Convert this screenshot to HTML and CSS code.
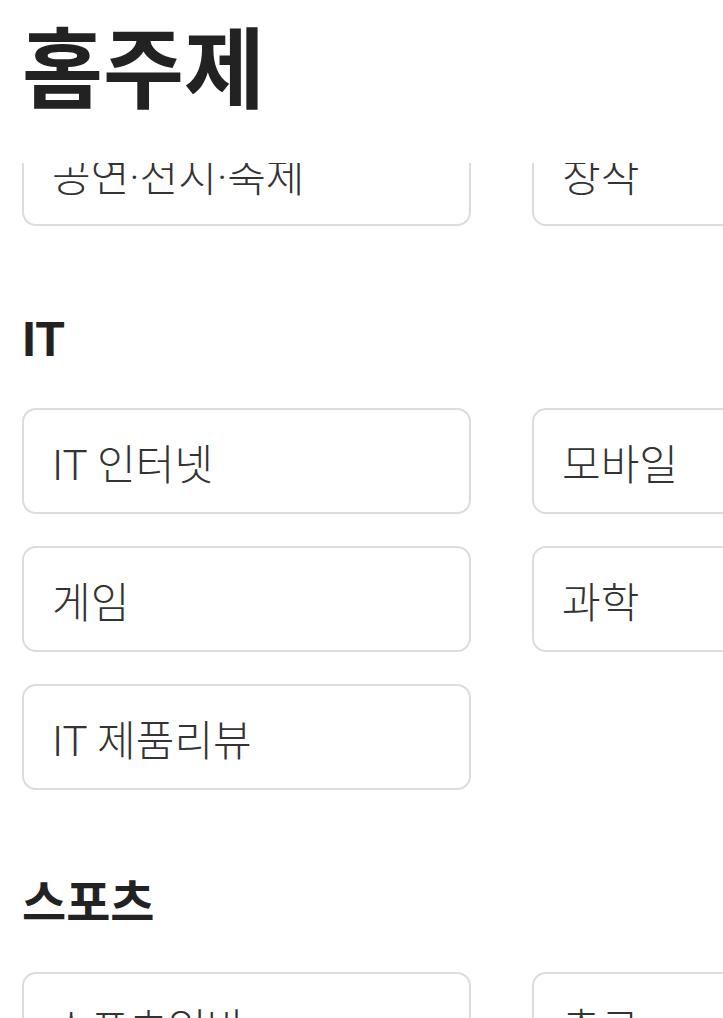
FILE: index.html
```html
<!DOCTYPE html>
<html lang="ko">
<head>
<meta charset="utf-8">
<title>홈주제</title>
<link rel="stylesheet" href="styles.css">
</head>
<body>
<div class="page">
  <header class="top">
    <h1 class="title">홈주제</h1>
  </header>
  <main class="scroll">
    <div class="list">
      <section class="section">
        <div class="grid">
          <div class="card">공연·전시·축제</div>
          <div class="card">창작</div>
        </div>
      </section>
      <section class="section">
        <h2 class="heading">IT</h2>
        <div class="grid">
          <div class="card">IT 인터넷</div>
          <div class="card">모바일</div>
          <div class="card">게임</div>
          <div class="card">과학</div>
          <div class="card">IT 제품리뷰</div>
        </div>
      </section>
      <section class="section">
        <h2 class="heading">스포츠</h2>
        <div class="grid">
          <div class="card">스포츠일반</div>
          <div class="card">축구</div>
        </div>
      </section>
    </div>
  </main>
</div>
</body>
</html>
```
FILE: styles.css
```css
html, body {
  margin: 0;
  padding: 0;
  background: #fff;
}
body {
  font-family: "Roboto", "Noto Sans CJK KR", sans-serif;
  color: #222;
  width: 723px;
  height: 1018px;
  overflow: hidden;
}
.page {
  display: flex;
  flex-direction: column;
  height: 1018px;
}
.top {
  flex: none;
  height: 163px;
  padding-left: 22px;
  background: #fff;
  box-sizing: border-box;
  padding-top: 8px;
}
.title {
  margin: 0;
  font-family: "Noto Sans CJK KR", sans-serif;
  font-size: 88px;
  font-weight: 700;
  line-height: 110px;
  color: #222;
}
.scroll {
  flex: 1;
  overflow: hidden;
}
.list {
  margin-top: -43px;
}
.section {
  padding-left: 22px;
}
.heading {
  margin: 84px 0 38px;
  font-size: 48px;
  font-weight: 700;
  line-height: 60px;
  color: #222;
}
.grid {
  display: grid;
  grid-template-columns: 449px 449px;
  column-gap: 61px;
  row-gap: 32px;
}
.card {
  height: 106px;
  box-sizing: border-box;
  border: 2px solid #dcdcdc;
  border-radius: 14px;
  padding: 0 28px;
  display: flex;
  align-items: center;
  font-size: 42px;
  font-weight: 300;
  color: #333;
  white-space: nowrap;
}
```
